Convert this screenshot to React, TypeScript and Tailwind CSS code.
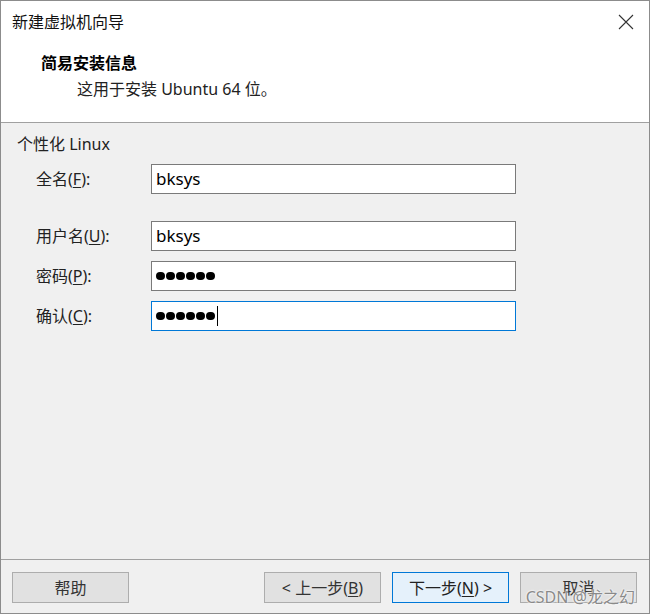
import React from 'react';

// Windows-style "new VM wizard" dialog, easy-install page.

const cjk = { fontFamily: '"Segoe UI", "Noto Sans", "Noto Sans CJK SC", sans-serif' };

function Field({ label, hot, value, password, focused }: {
  label: string;
  hot: string;
  value: string;
  password?: boolean;
  focused?: boolean;
}) {
  return (
    <div className="flex items-center h-[30px]">
      <div className="w-[150px] pl-[35px] text-[16px] text-[#222]">
        {label}(<span className="underline underline-offset-2">{hot}</span>):
      </div>
      <div
        className={
          'w-[365px] h-[30px] bg-white flex items-center pl-[4px] border ' +
          (focused ? 'border-[#0078d7]' : 'border-[#7a7a7a]')
        }
      >
        {password ? (
          <span className="flex items-center gap-[1.5px]">
            {Array.from({ length: 6 }).map((_, i) => (
              <span key={i} className="w-[8.5px] h-[8.5px] rounded-full bg-black inline-block" />
            ))}
            {focused && <span className="w-[1px] h-[20px] bg-black ml-[1px]" />}
          </span>
        ) : (
          <span className="text-[17px] text-black">{value}</span>
        )}
      </div>
    </div>
  );
}

function Btn({ children, primary, className = '' }: { children: React.ReactNode; primary?: boolean; className?: string }) {
  return (
    <div
      className={
        'w-[117px] h-[31px] flex items-center justify-center text-[16px] border ' +
        (primary ? 'bg-[#e5f1fb] border-[#0078d7] text-[#222]' : 'bg-[#e1e1e1] border-[#adadad] text-[#333]') +
        ' ' + className
      }
    >
      {children}
    </div>
  );
}

export default function App() {
  return (
    <div style={cjk} className="w-[650px] h-[614px] border border-[#8c8c8c] flex flex-col bg-[#f0f0f0] relative overflow-hidden">
      {/* title bar */}
      <div className="h-[41px] bg-white flex items-center justify-between pl-[11px] pr-[14px]">
        <span className="text-[16px] text-[#111]">新建虚拟机向导</span>
        <svg width="16" height="16" viewBox="0 0 16 16" className="mr-[1px]">
          <path d="M1 1 L15 15 M15 1 L1 15" stroke="#333" strokeWidth="1.1" fill="none" />
        </svg>
      </div>

      {/* header */}
      <div className="h-[81px] bg-white border-b border-[#a0a0a0] flex flex-col pt-[8px]">
        <div className="pl-[40px] text-[16px] font-bold text-black leading-[26px]">简易安装信息</div>
        <div className="pl-[76px] text-[16px] text-[#222] leading-[26px]">这用于安装 Ubuntu 64 位。</div>
      </div>

      {/* body */}
      <div className="flex-1 flex flex-col">
        <div className="pl-[16px] pt-[10px] text-[16px] text-[#222] leading-[22px]">个性化 Linux</div>
        <div className="flex flex-col mt-[9px]">
          <Field label="全名" hot="F" value="bksys" />
          <div className="h-[27px]" />
          <Field label="用户名" hot="U" value="bksys" />
          <div className="h-[10px]" />
          <Field label="密码" hot="P" value="" password />
          <div className="h-[10px]" />
          <Field label="确认" hot="C" value="" password focused />
        </div>
      </div>

      {/* footer */}
      <div className="h-[54px] border-t border-[#a0a0a0] flex items-start pt-[12px] pl-[11px] pr-[12px]">
        <Btn>帮助</Btn>
        <div className="flex-1" />
        <Btn className="mr-[11px]">&lt; 上一步(<span className="underline underline-offset-2">B</span>)</Btn>
        <Btn primary className="mr-[11px]">下一步(<span className="underline underline-offset-2">N</span>) &gt;</Btn>
        <Btn>取消</Btn>
      </div>

      {/* watermark */}
      <div className="absolute right-[14px] bottom-[6px] text-[16px] leading-[20px] text-[#8a8a8a] [text-shadow:0_0_2px_#fff,0_0_2px_#fff]">
        CSDN @龙之幻
      </div>
    </div>
  );
}
